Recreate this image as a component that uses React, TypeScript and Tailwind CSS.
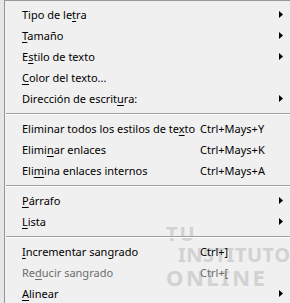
import React from "react";

type Item =
  | { type: "sep" }
  | {
      type: "item";
      label: string;
      key: number;
      shortcut?: string;
      sub?: boolean;
      disabled?: boolean;
    };

const items: Item[] = [
  { type: "item", label: "Tipo de letra", key: 10, sub: true },
  { type: "item", label: "Tamaño", key: 0, sub: true },
  { type: "item", label: "Estilo de texto", key: 1, sub: true },
  { type: "item", label: "Color del texto...", key: 0 },
  { type: "item", label: "Dirección de escritura:", key: 19, sub: true },
  { type: "sep" },
  { type: "item", label: "Eliminar todos los estilos de texto", key: 32, shortcut: "Ctrl+Mays+Y" },
  { type: "item", label: "Eliminar enlaces", key: 5, shortcut: "Ctrl+Mays+K" },
  { type: "item", label: "Elimina enlaces internos", key: 3, shortcut: "Ctrl+Mays+A" },
  { type: "sep" },
  { type: "item", label: "Párrafo", key: 0, sub: true },
  { type: "item", label: "Lista", key: 0, sub: true },
  { type: "sep" },
  { type: "item", label: "Incrementar sangrado", key: 0, shortcut: "Ctrl+]" },
  { type: "item", label: "Reducir sangrado", key: 2, shortcut: "Ctrl+[", disabled: true },
  { type: "item", label: "Alinear", key: 0, sub: true },
];

function Arrow() {
  return (
    <svg width="4" height="7" viewBox="0 0 4 7" className="block">
      <path d="M0 0 L4 3.5 L0 7 Z" fill="#000" />
    </svg>
  );
}

export default function App() {
  return (
    <div
      className="flex h-[303px] w-[290px] overflow-hidden bg-[#dcdcdc]"
      style={{ fontFamily: '"Noto Sans", "DejaVu Sans", sans-serif' }}
    >
      <div className="w-[4px] shrink-0 bg-[#e6e6e6]" />
      <div className="relative flex-1 border-l border-t border-[#979797] bg-[#f0f0f0] pt-[3px]">
        {/* watermark */}
        <div className="pointer-events-none absolute left-[161px] top-[223px] flex flex-col font-bold leading-none text-[#d2d2d2]">
          <span className="text-[20px] tracking-[2px]">TU</span>
          <span className="mt-[1px] pl-[12px] text-[20px] tracking-[0.5px]">INSTITUTO</span>
          <span className="mt-[1px] text-[22px] tracking-[2.5px]">ONLINE</span>
        </div>
        {items.map((it, i) =>
          it.type === "sep" ? (
            <div key={i} className="relative flex h-[9px] items-center pl-[1px]">
              <div className="h-[2px] w-full border-t border-b border-t-[#a0a0a0] border-b-white" />
            </div>
          ) : (
            <div
              key={i}
              className={`relative flex h-[21px] items-center text-[11px] leading-none ${
                it.disabled ? "text-[#6d6d6d]" : "text-black"
              }`}
            >
              <span className="w-[195px] shrink-0 pl-[17px] whitespace-nowrap">
                {it.label.slice(0, it.key)}
                <span className="underline underline-offset-2">{it.label[it.key]}</span>
                {it.label.slice(it.key + 1)}
              </span>
              <span className="flex-1 whitespace-nowrap">{it.shortcut ?? ""}</span>
              {it.sub && (
                <span className="w-[11px] shrink-0">
                  <Arrow />
                </span>
              )}
            </div>
          )
        )}
      </div>
    </div>
  );
}
